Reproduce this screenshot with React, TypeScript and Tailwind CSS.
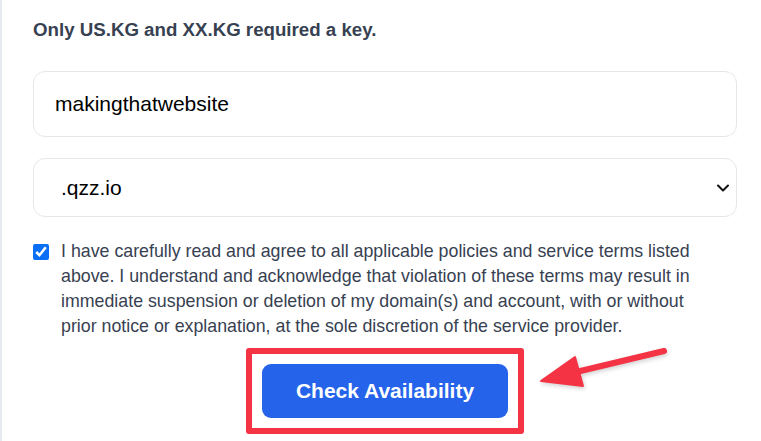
import { useState } from "react";

function Chevron() {
  return (
    <svg className="pointer-events-none absolute right-[7px] top-1/2 -translate-y-1/2" width="14" height="9" viewBox="0 0 14 9" fill="none">
      <path d="M2 2l5 5 5-5" stroke="#111" strokeWidth="2" strokeLinecap="round" strokeLinejoin="round" />
    </svg>
  );
}

function Arrow() {
  return (
    <svg className="pointer-events-none absolute left-[530px] top-[340px]" width="145" height="60" viewBox="530 340 145 60" fill="none">
      <g style={{ filter: "drop-shadow(1px 2px 2px rgba(0,0,0,0.18))" }}>
        <line x1="662" y1="351" x2="570" y2="373" stroke="#f43345" strokeWidth="6" strokeLinecap="round" />
        <path d="M539 381 L573 357 L581 386 Z" fill="#f43345" stroke="#f43345" strokeWidth="2" strokeLinejoin="round" />
      </g>
    </svg>
  );
}

export default function App() {
  const [name, setName] = useState("makingthatwebsite");
  const [tld, setTld] = useState(".qzz.io");
  const [agree, setAgree] = useState(true);

  return (
    <div className="relative h-[441px] w-[761px] overflow-hidden border-l-2 border-[#e6eaef] bg-white font-['Liberation_Sans',Arial,sans-serif]">
      <div className="flex w-[735px] flex-col pl-[31px] pt-[17px]">
        <p className="text-[18.7px] font-bold leading-[26px] text-[#374151]">Only US.KG and XX.KG required a key.</p>
        <input
          className="mt-[28px] h-[66px] w-full rounded-[12px] border border-[#e5e7eb] px-[21px] text-[21px] text-black outline-none"
          value={name}
          onChange={(e) => setName(e.target.value)}
        />
        <div className="relative mt-[21px]">
          <select
            className="h-[59px] w-full appearance-none rounded-[12px] border border-[#e5e7eb] bg-white px-[27px] text-[21px] text-black outline-none"
            value={tld}
            onChange={(e) => setTld(e.target.value)}
          >
            <option>.qzz.io</option>
            <option>.us.kg</option>
            <option>.xx.kg</option>
          </select>
          <Chevron />
        </div>
        <label className="mt-[22px] flex gap-[12px] text-[17.8px] leading-[25px] text-[#374151]">
          <input
            type="checkbox"
            className="mt-[5px] h-[16px] w-[16px] shrink-0 accent-[#0b6ff5]"
            checked={agree}
            onChange={(e) => setAgree(e.target.checked)}
          />
          <span className="w-[658px]">
            I have carefully read and agree to all applicable policies and service terms listed above. I understand and acknowledge that violation of these terms may result in immediate suspension or deletion of my domain(s) and account, with or without prior notice or explanation, at the sole discretion of the service provider.
          </span>
        </label>
        <div className="mt-[9px] self-center rounded-[3px] border-[6px] border-[#f43345] p-[10px]">
          <button className="h-[54px] w-[246px] rounded-[9px] bg-[#2563eb] text-[21px] font-bold text-white">Check Availability</button>
        </div>
      </div>
      <Arrow />
    </div>
  );
}
